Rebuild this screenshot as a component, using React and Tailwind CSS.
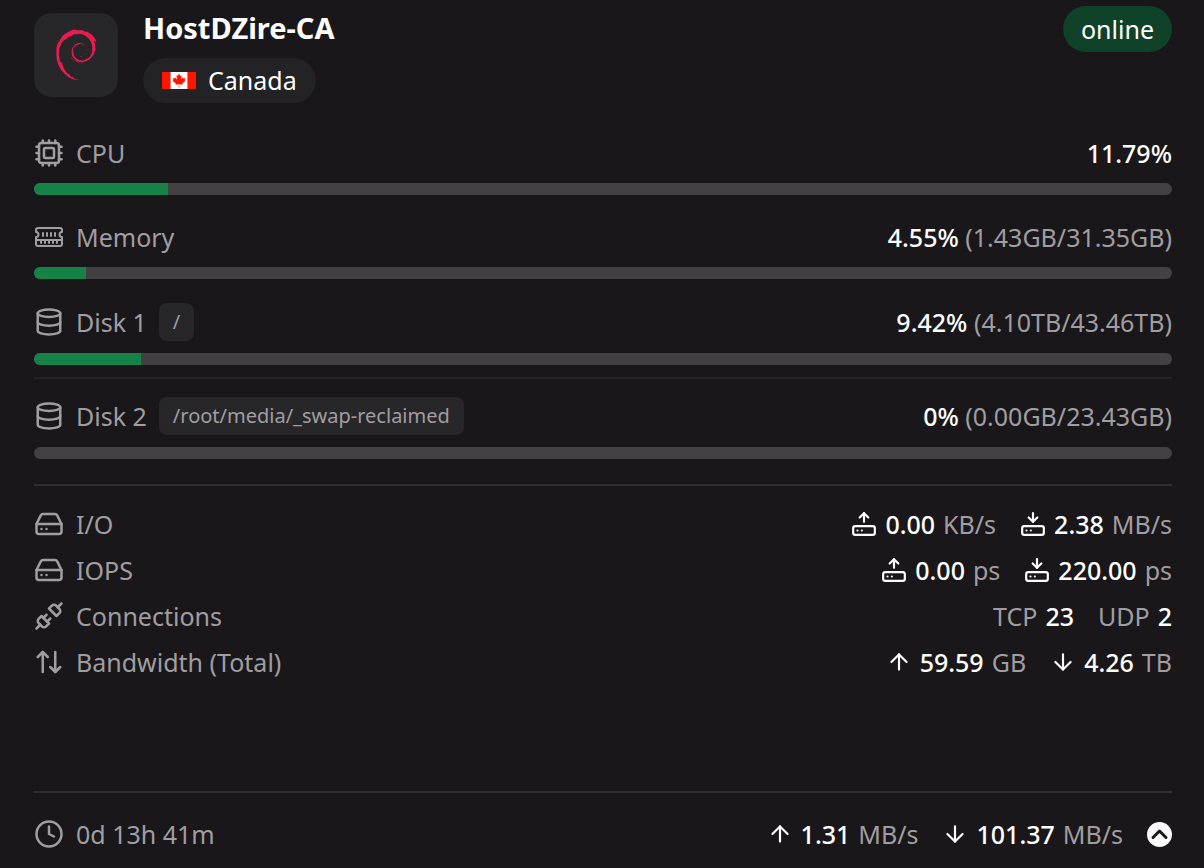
import React, { useState } from "react";
import {
  ArrowDown,
  ArrowUp,
  ArrowUpDown,
  Clock,
  Cpu,
  Database,
  HardDrive,
  HardDriveDownload,
  HardDriveUpload,
  Unplug,
} from "lucide-react";
import { SiDebian } from "react-icons/si";

const server = {
  name: "HostDZire-CA",
  country: "Canada",
  status: "online",
  uptime: "0d 13h 41m",
};

const MemoryIcon = ({ className }) => (
  <svg
    className={className}
    viewBox="0 0 30 30"
    fill="none"
    stroke="currentColor"
    strokeWidth="2"
    strokeLinecap="round"
    strokeLinejoin="round"
    aria-hidden="true"
  >
    <path d="M4 6h22a2 2 0 0 1 2 2v2a2.5 2.5 0 0 0 0 5v7a2 2 0 0 1-2 2H4a2 2 0 0 1-2-2v-7a2.5 2.5 0 0 0 0-5V8a2 2 0 0 1 2-2z" />
    <path d="M2 18h26" />
    <path d="M9 11v3M13 11v3M17 11v3M21 11v3" />
    <path d="M7 18v3M11 18v3M15 18v3M19 18v3M23 18v3" />
  </svg>
);

const usage = [
  { label: "CPU", icon: Cpu, percent: 11.79 },
  { label: "Memory", icon: MemoryIcon, percent: 4.55, detail: "(1.43GB/31.35GB)" },
];

const disks = [
  { label: "Disk 1", icon: Database, mount: "/", percent: 9.42, detail: "(4.10TB/43.46TB)" },
  {
    label: "Disk 2",
    icon: Database,
    mount: "/root/media/_swap-reclaimed",
    percent: 0,
    detail: "(0.00GB/23.43GB)",
  },
];

const CanadaFlag = () => (
  <svg className="w-[34px] h-[17px] shrink-0" viewBox="0 0 9600 4800" aria-hidden="true">
    <path fill="#ff1500" d="M0 0h2400v4800H0zM7200 0h2400v4800H7200z" />
    <path fill="#fff" d="M2400 0h4800v4800H2400z" />
    <path
      fill="#ff1500"
      d="M4890 4430l-45-863a95 95 0 0 1 111-98l859 151-116-320a65 65 0 0 1 20-73l941-762-212-99a65 65 0 0 1-34-79l186-572-542 115a65 65 0 0 1-73-38l-105-247-423 454a65 65 0 0 1-111-57l204-1052-327 189a65 65 0 0 1-91-27l-332-652-332 652a65 65 0 0 1-91 27l-327-189 204 1052a65 65 0 0 1-111 57l-423-454-105 247a65 65 0 0 1-73 38l-542-115 186 572a65 65 0 0 1-34 79l-212 99 941 762a65 65 0 0 1 20 73l-116 320 859-151a95 95 0 0 1 111 98l-45 863z"
    />
  </svg>
);

const Label = ({ icon: Icon, children }) => (
  <div className="flex items-center gap-3">
    <Icon className="size-[30px] shrink-0" strokeWidth={2} />
    <span>{children}</span>
  </div>
);

const UsageRow = ({ label, icon, mount, percent, detail }) => (
  <div>
    <div className="flex items-center justify-between leading-9">
      <div className="flex items-center gap-3">
        <Label icon={icon}>{label}</Label>
        {mount && (
          <span className="rounded-lg bg-[#272629] px-3.5 text-[20px] leading-[38px]">
            {mount}
          </span>
        )}
      </div>
      <div>
        <span className="font-medium text-white">{percent}%</span>
        {detail && <span> {detail}</span>}
      </div>
    </div>
    <div className="mt-3 h-3 overflow-hidden rounded-full bg-[#424043]">
      <div className="h-full bg-[#158348]" style={{ width: `${percent}%` }} />
    </div>
  </div>
);

const Stat = ({ icon: Icon, value, unit }) => (
  <div className="flex items-center gap-2">
    <Icon className="size-[26px] shrink-0 text-white" strokeWidth={2} />
    <span className="font-medium text-white">{value}</span>
    <span>{unit}</span>
  </div>
);

const Count = ({ label, value }) => (
  <div className="flex items-center gap-2">
    <span>{label}</span>
    <span className="font-medium text-white">{value}</span>
  </div>
);

const StatRow = ({ label, icon, children }) => (
  <div className="flex items-center justify-between leading-[46px]">
    <Label icon={icon}>{label}</Label>
    <div className="flex items-center gap-6">{children}</div>
  </div>
);

const App = () => {
  const [open, setOpen] = useState(true);

  return (
    <main className="flex min-h-screen flex-col bg-[#19171a] pl-[34px] pr-8 pt-1.5 font-['Noto_Sans',sans-serif] text-[25px] text-[#a09ea1]">
      <header className="flex items-start justify-between text-white">
        <div className="flex items-center gap-[25px]">
          <div className="flex size-[84px] items-center justify-center rounded-[18px] bg-[#272629]">
            <SiDebian className="size-[51px] text-[#e81c4f]" />
          </div>
          <div className="flex flex-col items-start gap-2">
            <h1 className="text-[29px] font-bold leading-[44px]">{server.name}</h1>
            <div className="flex items-center gap-3 rounded-full bg-[#232225] px-[19px] leading-[45px]">
              <CanadaFlag />
              <span>{server.country}</span>
            </div>
          </div>
        </div>
        <span className="rounded-full bg-[#0f4228] px-[18px] leading-[46px]">
          {server.status}
        </span>
      </header>

      <section className="mt-8 flex flex-col gap-6">
        {usage.map((item) => (
          <UsageRow key={item.label} {...item} />
        ))}
        <div className="flex flex-col divide-y-2 divide-[#242326]">
          {disks.map((disk) => (
            <div key={disk.label} className="pb-3 not-first:pt-[18px]">
              <UsageRow {...disk} />
            </div>
          ))}
        </div>
      </section>

      {open && (
        <section className="mt-[13px] border-t-2 border-[#2e2d30] pt-[15px]">
          <StatRow label="I/O" icon={HardDrive}>
            <Stat icon={HardDriveUpload} value="0.00" unit="KB/s" />
            <Stat icon={HardDriveDownload} value="2.38" unit="MB/s" />
          </StatRow>
          <StatRow label="IOPS" icon={HardDrive}>
            <Stat icon={HardDriveUpload} value="0.00" unit="ps" />
            <Stat icon={HardDriveDownload} value="220.00" unit="ps" />
          </StatRow>
          <StatRow label="Connections" icon={Unplug}>
            <Count label="TCP" value="23" />
            <Count label="UDP" value="2" />
          </StatRow>
          <StatRow label="Bandwidth (Total)" icon={ArrowUpDown}>
            <Stat icon={ArrowUp} value="59.59" unit="GB" />
            <Stat icon={ArrowDown} value="4.26" unit="TB" />
          </StatRow>
        </section>
      )}

      <footer className="mt-auto flex items-center justify-between border-t-2 border-[#2e2d30] pb-4 pt-[23px] leading-9">
        <Label icon={Clock}>{server.uptime}</Label>
        <div className="flex items-center gap-6">
          <Stat icon={ArrowUp} value="1.31" unit="MB/s" />
          <Stat icon={ArrowDown} value="101.37" unit="MB/s" />
          <button
            type="button"
            aria-label="Toggle details"
            aria-expanded={open}
            onClick={() => setOpen(!open)}
            className="cursor-pointer"
          >
            <svg
              className={`size-[25px] ${open ? "" : "rotate-180"}`}
              viewBox="0 0 25 25"
              fill="none"
            >
              <circle cx="12.5" cy="12.5" r="12.5" fill="#fafafa" />
              <path
                d="M6 15.5l6.5-6.5 6.5 6.5"
                stroke="#19171a"
                strokeWidth="3"
                strokeLinecap="round"
                strokeLinejoin="round"
              />
            </svg>
          </button>
        </div>
      </footer>
    </main>
  );
};

export default App;
